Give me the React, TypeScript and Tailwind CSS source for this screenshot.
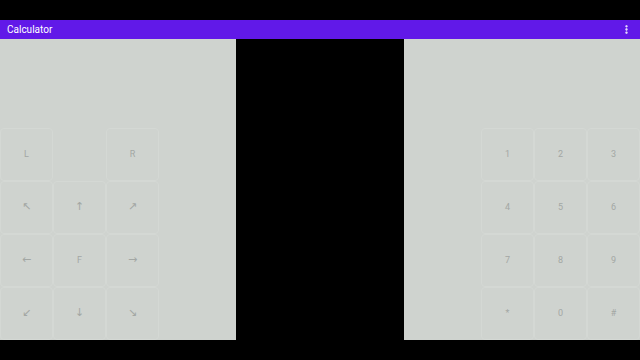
import { EllipsisVertical } from 'lucide-react'

const leftKeys = ['L', '', 'R', '↖', '↑', '↗', '←', 'F', '→', '↙', '↓', '↘']
const rightKeys = ['1', '2', '3', '4', '5', '6', '7', '8', '9', '*', '0', '#']

function Key({ label }: { label: string }) {
  const arrow = /[←-⇿]/.test(label)
  return (
    <div
      className={
        'flex items-center justify-center h-[53px] w-[53px] border border-[#d4d8d4] rounded-[4px] text-[#a3a7a4] ' +
        (arrow ? 'text-[11px]' : 'text-[9px]')
      }
      style={arrow ? { fontFamily: '"DejaVu Sans", sans-serif' } : undefined}
    >
      {label}
    </div>
  )
}

export default function App() {
  return (
    <div
      className="w-[640px] h-[360px] bg-black flex flex-col"
      style={{ fontFamily: 'Roboto, "Liberation Sans", sans-serif' }}
    >
      <div className="h-[20px] shrink-0" />
      <div className="h-[19px] shrink-0 bg-[#6119e8] flex items-center justify-between pl-[7px] pr-[8px]">
        <span className="text-[10px] text-white">Calculator</span>
        <EllipsisVertical className="size-[11px] text-white" strokeWidth={3} />
      </div>
      <div className="h-[301px] flex">
        <div className="w-[236px] bg-[#cfd3cf] flex flex-col justify-end">
          <div className="grid grid-cols-[repeat(3,53px)] grid-rows-[repeat(4,53px)]">
            {leftKeys.map((k, i) =>
              k ? <Key key={i} label={k} /> : <div key={i} />,
            )}
          </div>
        </div>
        <div className="flex-1" />
        <div className="w-[236px] bg-[#cfd3cf] flex flex-col justify-end items-end">
          <div className="grid grid-cols-[repeat(3,53px)] grid-rows-[repeat(4,53px)]">
            {rightKeys.map((k, i) => (
              <Key key={i} label={k} />
            ))}
          </div>
        </div>
      </div>
    </div>
  )
}
